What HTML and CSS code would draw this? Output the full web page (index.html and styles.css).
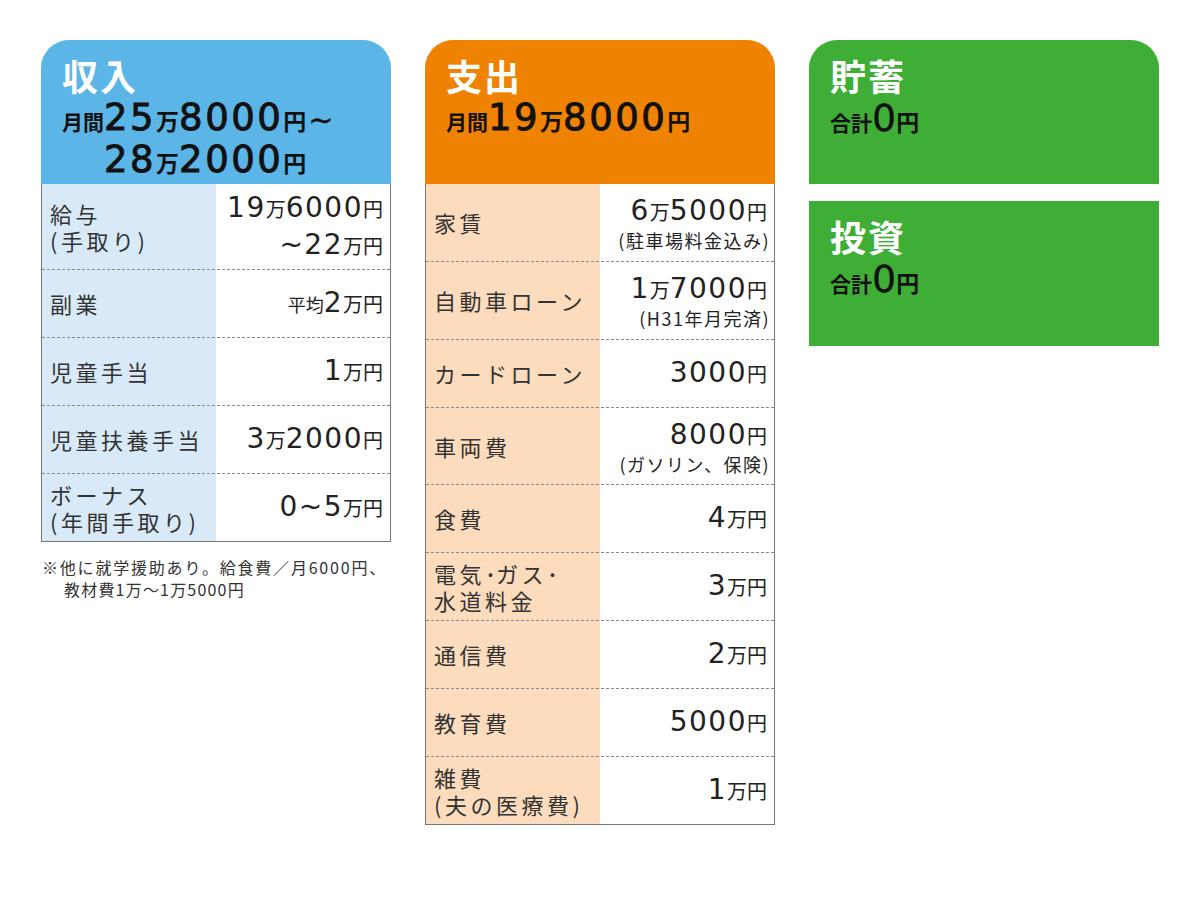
FILE: index.html
```html
<!DOCTYPE html>
<html lang="ja">
<head>
<meta charset="utf-8">
<link rel="stylesheet" href="styles.css">
</head>
<body>
<div class="page">
  <section class="col">
    <div class="head blue">
      <div class="title">収入</div>
      <div class="total">
        <span class="lbl">月間</span>
        <div class="amt">
          <div>25<small>万</small>8000<small>円</small><span class="tl">~</span></div>
          <div>28<small>万</small>2000<small>円</small></div>
        </div>
      </div>
    </div>
    <div class="table inc">
      <div class="row h85"><div class="k"><div>給与</div><div>(手取り)</div></div><div class="v"><div>19<small>万</small>6000<small>円</small></div><div class="l2">~22<small>万円</small></div></div></div>
      <div class="row"><div class="k">副業</div><div class="v"><div><small class="xs">平均</small>2<small>万円</small></div></div></div>
      <div class="row"><div class="k">児童手当</div><div class="v"><div>1<small>万円</small></div></div></div>
      <div class="row"><div class="k">児童扶養手当</div><div class="v"><div>3<small>万</small>2000<small>円</small></div></div></div>
      <div class="row"><div class="k"><div>ボーナス</div><div>(年間手取り)</div></div><div class="v"><div>0~5<small>万円</small></div></div></div>
    </div>
    <p class="note">※他に就学援助あり。給食費／月6000円、<br><span class="ind">教材費1万～1万5000円</span></p>
  </section>

  <section class="col">
    <div class="head orange">
      <div class="title">支出</div>
      <div class="total">
        <span class="lbl">月間</span>
        <div class="amt"><div>19<small>万</small>8000<small>円</small></div></div>
      </div>
    </div>
    <div class="table exp">
      <div class="row h76"><div class="k">家賃</div><div class="v"><div>6<small>万</small>5000<small>円</small></div><div class="sub">(駐車場料金込み)</div></div></div>
      <div class="row h78"><div class="k">自動車ローン</div><div class="v"><div>1<small>万</small>7000<small>円</small></div><div class="sub">(H31年月完済)</div></div></div>
      <div class="row"><div class="k">カードローン</div><div class="v"><div>3000<small>円</small></div></div></div>
      <div class="row h76"><div class="k">車両費</div><div class="v"><div>8000<small>円</small></div><div class="sub">(ガソリン、保険)</div></div></div>
      <div class="row"><div class="k">食費</div><div class="v"><div>4<small>万円</small></div></div></div>
      <div class="row"><div class="k"><div>電気<span class="dot">･</span>ガス<span class="dot">･</span></div><div>水道料金</div></div><div class="v"><div>3<small>万円</small></div></div></div>
      <div class="row"><div class="k">通信費</div><div class="v"><div>2<small>万円</small></div></div></div>
      <div class="row"><div class="k">教育費</div><div class="v"><div>5000<small>円</small></div></div></div>
      <div class="row"><div class="k"><div>雑費</div><div>(夫の医療費)</div></div><div class="v"><div>1<small>万円</small></div></div></div>
    </div>
  </section>

  <section class="col">
    <div class="head green">
      <div class="title">貯蓄</div>
      <div class="total"><span class="lbl">合計</span><div class="amt zero"><div>0<small>円</small></div></div></div>
    </div>
    <div class="head green square">
      <div class="title">投資</div>
      <div class="total"><span class="lbl">合計</span><div class="amt zero"><div>0<small>円</small></div></div></div>
    </div>
  </section>
</div>
</body>
</html>
```

FILE: styles.css
```css
* { box-sizing: border-box; }
body {
  margin: 0;
  background: #fff;
  font-family: "Noto Sans CJK JP", "Noto Sans", sans-serif;
  color: #222;
}
.page {
  display: flex;
  gap: 34px;
  padding: 40px 0 0 41px;
}
.col {
  width: 350px;
  display: flex;
  flex-direction: column;
}
.head {
  height: 144px;
  border-radius: 28px 28px 0 0;
  padding: 12px 0 0 21px;
}
.blue { background: #5bb5e6; }
.orange { background: #ef8200; }
.green { background: #3fae36; }
.square { border-radius: 0; margin-top: 17px; height: 145px; }
.title {
  color: #fff;
  font-weight: 700;
  font-size: 36px;
  line-height: 46px;
  letter-spacing: 2px;
}
.total {
  display: flex;
  align-items: baseline;
  color: #111;
  font-weight: 700;
}
.total .lbl { font-size: 21px; letter-spacing: 0; }
.total .amt {
  font-family: "DejaVu Sans", "Noto Sans CJK JP", sans-serif;
  font-weight: 400;
  -webkit-text-stroke: 0.9px #111;
  font-size: 37px;
  line-height: 40px;
  letter-spacing: 2.5px;
}
.total .amt small {
  font-family: "Noto Sans CJK JP", sans-serif;
  font-weight: 700;
  -webkit-text-stroke: 0;
  font-size: 23px;
  letter-spacing: 0;
}
.total .amt .tl {
  font-size: 30px;
  -webkit-text-stroke: 0.4px #111;
  margin-left: 2px;
}
.total .amt.zero { font-size: 38px; letter-spacing: 0; -webkit-text-stroke: 0.3px #111; }

.table {
  border: 1px solid #777;
  border-top: none;
}
.inc { background: linear-gradient(to right, #d8e9f7 174px, #fff 174px); }
.exp { background: linear-gradient(to right, #fcdcbd 174px, #fff 174px); }
.row {
  display: flex;
  height: 68px;
  align-items: center;
  border-top: 1px dashed #8a8a8a;
}
.row:first-child { border-top: none; }
.h85 { height: 85px; }
.h76 { height: 77px; }
.h78 { height: 78px; }
.k {
  width: 174px;
  padding-left: 8px;
  font-size: 22px;
  line-height: 27px;
  letter-spacing: 3.5px;
  color: #333;
}
.k .dot { letter-spacing: 0; }
.v {
  flex: 1;
  text-align: right;
  padding-right: 7px;
  font-family: "DejaVu Sans", "Noto Sans CJK JP", sans-serif;
  font-size: 28px;
  line-height: 34px;
  letter-spacing: 1.5px;
  color: #222;
}
.v small {
  font-family: "Noto Sans CJK JP", sans-serif;
  font-size: 20px;
  letter-spacing: 0;
}
.v small.xs { font-size: 18px; }
.v .l2 { margin-top: 2px; }
.v .sub {
  font-family: "Noto Sans CJK JP", sans-serif;
  font-size: 18px;
  line-height: 22px;
  letter-spacing: 1.5px;
  margin-right: -3px;
}
.note {
  margin: 14px 0 0 1px;
  font-size: 16px;
  line-height: 22px;
  letter-spacing: 1.8px;
  white-space: nowrap;
  color: #333;
}
.note .ind { padding-left: 22px; letter-spacing: 1.2px; }
```
